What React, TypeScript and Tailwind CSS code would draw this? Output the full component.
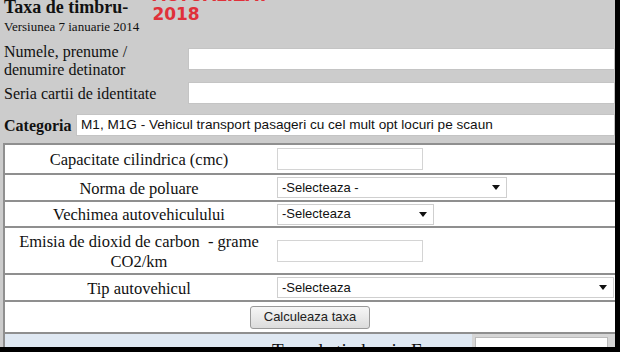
import React from "react";

const serif = "font-['Liberation_Serif',serif]";
const sans = "font-['Liberation_Sans',Arial,sans-serif]";

function Arrow() {
  return (
    <svg width="8" height="5" viewBox="0 0 8 5" className="shrink-0">
      <path d="M0 0h8L4 5z" fill="#111" />
    </svg>
  );
}

function Select({ text, width }: { text: string; width: string }) {
  return (
    <div
      className={`${width} h-[21px] flex items-center justify-between bg-white border border-[#cfcfcf] pl-[4px] pr-[6px] ${sans} text-[13px] text-[#111]`}
    >
      <span>{text}</span>
      <Arrow />
    </div>
  );
}

function TextBox({ width }: { width: string }) {
  return <div className={`${width} h-[22px] bg-white border border-[#d4d4d4]`} />;
}

function Row({
  label,
  height,
  children,
}: {
  label: React.ReactNode;
  height: string;
  children: React.ReactNode;
}) {
  return (
    <div className={`flex ${height} border-b-2 border-[#8f8f8f]`}>
      <div
        className={`w-[268px] shrink-0 flex items-center justify-center text-center ${serif} text-[16.5px] leading-[20px] text-[#111] pt-[2px]`}
      >
        {label}
      </div>
      <div className="flex-1 flex items-center pl-[4px]">{children}</div>
    </div>
  );
}

export default function App() {
  return (
    <div className="w-[620px] h-[352px] bg-black overflow-hidden">
      <div className="w-[615px] h-[347px] bg-[#cccccc] overflow-hidden">
        {/* Header */}
        <div className="flex items-start pl-[4px] h-[42px]">
          <div className="flex flex-col">
            <div className={`${serif} font-bold text-[18px] leading-[18px] text-[#111] -mt-[2px]`}>
              Taxa de timbru-
            </div>
            <div className={`${serif} text-[13px] leading-[16px] text-[#111] mt-[3px]`}>
              Versiunea 7 ianuarie 2014
            </div>
          </div>
          <div className="flex flex-col ml-[13px] -mt-[12px] font-['DejaVu_Sans',sans-serif] font-bold text-[17px] text-[#e0303a]">
            <span className="leading-[14px]">ACTUALIZAT</span>
            <span className="leading-[18px] mt-[3px]">2018</span>
          </div>
        </div>

        {/* Owner */}
        <div className="flex items-center h-[37px] pl-[4px]">
          <div className={`w-[184px] shrink-0 ${serif} text-[16px] leading-[18px] text-[#111]`}>
            Numele, prenume /
            <br />
            denumire detinator
          </div>
          <div className="flex-1 h-[22px] bg-white border border-[#c4c4c4] -mt-[3px]" />
        </div>
        <div className="flex items-center h-[22px] pl-[4px] mt-[3px]">
          <div className={`w-[184px] shrink-0 ${serif} text-[16px] leading-[18px] text-[#111] pt-[2px]`}>
            Seria cartii de identitate
          </div>
          <div className="flex-1 h-[22px] bg-white border border-[#c4c4c4]" />
        </div>

        {/* Categoria */}
        <div className="flex items-center h-[22px] pl-[4px] mt-[10px]">
          <div className={`w-[72px] shrink-0 ${serif} font-bold text-[16px] leading-[18px] text-[#111] pt-[2px]`}>
            Categoria
          </div>
          <div
            className={`flex-1 h-[22px] flex items-center bg-white border border-[#c4c4c4] pl-[4px] ${sans} text-[13.6px] text-[#111]`}
          >
            M1, M1G - Vehicul transport pasageri cu cel mult opt locuri pe scaun
          </div>
        </div>

        {/* Table */}
        <div className="mt-[7px] ml-[3px] bg-white border-l-2 border-t-2 border-[#8f8f8f]">
          <Row label="Capacitate cilindrica (cmc)" height="h-[30px]">
            <TextBox width="w-[146px]" />
          </Row>
          <Row label="Norma de poluare" height="h-[27px]">
            <Select text="-Selecteaza -" width="w-[230px]" />
          </Row>
          <Row label="Vechimea autovehiculului" height="h-[26px]">
            <Select text="-Selecteaza" width="w-[157px]" />
          </Row>
          <Row
            label={
              <span>
                Emisia de dioxid de carbon&nbsp; - grame
                <br />
                CO2/km
              </span>
            }
            height="h-[47px]"
          >
            <TextBox width="w-[146px]" />
          </Row>
          <Row label="Tip autovehicul" height="h-[27px]">
            <Select text="-Selecteaza" width="w-[337px]" />
          </Row>
          <div className="flex h-[32px] items-center justify-center border-b-2 border-[#8f8f8f]">
            <button
              className={`w-[120px] h-[23px] rounded-[3px] border border-[#9a9a9a] bg-gradient-to-b from-[#f6f6f6] to-[#dcdcdc] ${sans} text-[13px] text-[#222]`}
            >
              Calculeaza taxa
            </button>
          </div>
          <div className="flex h-[14px]">
            <div
              className={`w-[467px] shrink-0 bg-[#dfe8f2] flex justify-end pr-[24px] pt-[7px] ${serif} text-[19px] leading-[20px] text-[#111]`}
            >
              Taxa de timbru in Euro
            </div>
            <div className="flex-1 bg-[#d6d6d6] pl-[3px] pr-[7px] pt-[3px]">
              <div className="h-[14px] bg-white border border-[#bbbbbb]" />
            </div>
          </div>
        </div>
      </div>
    </div>
  );
}
